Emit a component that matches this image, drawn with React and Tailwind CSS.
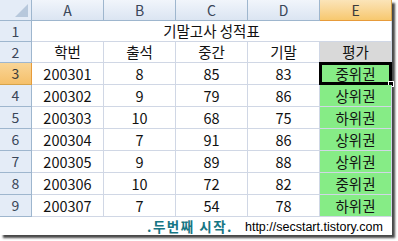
import React from 'react'

const COLS = ['A', 'B', 'C', 'D', 'E']

const rows = [
  ['200301', '8', '85', '83', '중위권'],
  ['200302', '9', '79', '86', '상위권'],
  ['200303', '10', '68', '75', '하위권'],
  ['200304', '7', '91', '86', '상위권'],
  ['200305', '9', '89', '88', '상위권'],
  ['200306', '10', '72', '82', '중위권'],
  ['200307', '7', '54', '78', '하위권'],
]

const font = { fontFamily: '"Malgun Gothic", "Noto Sans CJK KR", "Noto Sans", sans-serif' }

function ColHeader({ label, active }) {
  return (
    <div
      className={
        'w-[72px] h-full flex items-center justify-center border-r border-b text-[14px] ' +
        (active
          ? 'bg-gradient-to-b from-[#fbe4b8] to-[#f7c86e] border-r-[#d6a34a] border-b-[#e79b3a] text-[#3a3a3a]'
          : 'bg-gradient-to-b from-[#f1f5fb] to-[#dbe5f2] border-[#9eb6ce] text-[#3a4658]')
      }
    >
      {label}
    </div>
  )
}

function RowHeader({ n, active }) {
  return (
    <div
      className={
        'w-[32px] h-full flex items-center justify-center border-r border-b text-[14px] ' +
        (active
          ? 'bg-gradient-to-b from-[#f9d596] to-[#f5c06a] border-r-[#e79b3a] border-b-[#d6a34a] text-[#3a3a3a]'
          : 'bg-[#e4ecf7] border-[#9eb6ce] text-[#3a4658]')
      }
    >
      {n}
    </div>
  )
}

function Cell({ children, className = '' }) {
  return (
    <div className={'w-[72px] h-full flex items-center justify-center border-r border-b border-[#d0d7e5] text-[14.5px] text-[#111] ' + className}>
      {children}
    </div>
  )
}

export default function App() {
  return (
    <div className="w-[398px] h-[241px] bg-white overflow-hidden" style={font}>
      <div className="w-[392px] bg-white shadow-[3px_3px_2px_rgba(40,40,40,0.85)]">
        {/* column headers */}
        <div className="flex h-[21px]">
          <div className="w-[32px] h-full border-r border-b border-[#9eb6ce] bg-[#e4ecf7] flex items-end justify-end pr-[3px] pb-[3px]">
            <svg width="13" height="13" viewBox="0 0 13 13">
              <polygon points="13,0 13,13 0,13" fill="#b7c8dc" />
            </svg>
          </div>
          {COLS.map((c) => (
            <ColHeader key={c} label={c} active={c === 'E'} />
          ))}
        </div>

        {/* row 1: merged title */}
        <div className="flex h-[21px]">
          <RowHeader n={1} />
          <div className="w-[360px] h-full flex items-center justify-center border-r border-b border-[#d0d7e5] text-[14.5px] text-[#111]">
            기말고사 성적표
          </div>
        </div>

        {/* row 2: headings */}
        <div className="flex h-[21px]">
          <RowHeader n={2} />
          <Cell>학번</Cell>
          <Cell>출석</Cell>
          <Cell>중간</Cell>
          <Cell>기말</Cell>
          <Cell className="bg-[#d9d9d9]">평가</Cell>
        </div>

        {rows.map((r, i) => (
          <div key={r[0]} className="flex h-[22px]">
            <RowHeader n={i + 3} active={i === 0} />
            <Cell>{r[0]}</Cell>
            <Cell>{r[1]}</Cell>
            <Cell>{r[2]}</Cell>
            <Cell>{r[3]}</Cell>
            <Cell className="relative bg-[#86ec86]">
              {r[4]}
              {i === 0 && (
                <>
                  <div className="absolute -left-[1px] -top-[1px] -right-[1px] -bottom-[1px] border-[3px] border-black" />
                  <div className="absolute -right-[3px] -bottom-[3px] w-[6px] h-[6px] bg-black border border-white" />
                </>
              )}
            </Cell>
          </div>
        ))}

        {/* footer */}
        <div className="flex items-center h-[18px] pt-[2px]">
          <span className="ml-[147px] text-[13.5px] font-bold tracking-[1.5px] text-[#167684] leading-none">.두번째 시작.</span>
          <span className="ml-[12px] text-[12.5px] text-black leading-none" style={{ fontFamily: '"Liberation Sans", sans-serif' }}>
            http://secstart.tistory.com
          </span>
        </div>
      </div>
    </div>
  )
}
